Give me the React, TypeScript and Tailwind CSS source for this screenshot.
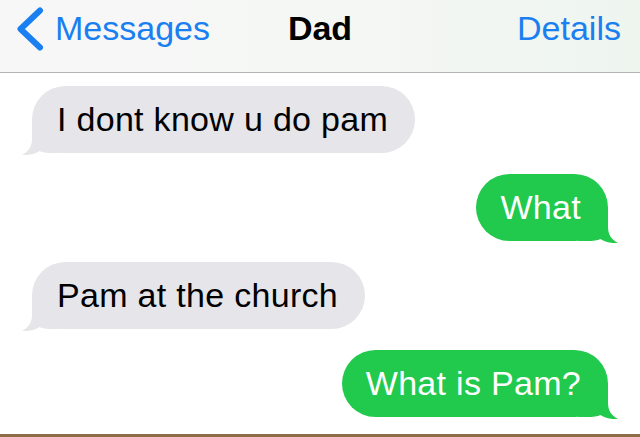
import type { ReactNode } from "react"

type Side = "in" | "out"

interface Message {
  id: number
  side: Side
  text: string
}

const messages: Message[] = [
  { id: 1, side: "in", text: "I dont know u do pam" },
  { id: 2, side: "out", text: "What" },
  { id: 3, side: "in", text: "Pam at the church" },
  { id: 4, side: "out", text: "What is Pam?" },
]

const font = { fontFamily: '"Liberation Sans", Helvetica, Arial, sans-serif' }

// little curled tail on the bottom corner of a bubble
function Tail({ side, color }: { side: Side; color: string }) {
  return (
    <svg
      width="40"
      height="36"
      viewBox="0 0 40 36"
      className={
        side === "in"
          ? "absolute -left-[10px] -bottom-[2px]"
          : "absolute -right-[10px] -bottom-[2px] -scale-x-100"
      }
    >
      <path
        d="M10 0 L10 20 C10 28 6 33 0 36 C7 36.5 13 35 17.5 32 C20.5 33.5 25 34 30 34 L40 34 L40 0 Z"
        fill={color}
      />
    </svg>
  )
}

function Bubble({ side, children }: { side: Side; children: ReactNode }) {
  const incoming = side === "in"
  return (
    <div className={incoming ? "flex justify-start" : "flex justify-end"}>
      <div
        className={
          incoming
            ? "relative rounded-full bg-[#e5e5ea] py-4 pl-[25px] pr-[27px] text-[34px] leading-[35px] tracking-[0.3px] text-black"
            : "relative rounded-full bg-[#21c94d] py-4 pl-[24px] pr-[27px] text-[34px] leading-[35px] tracking-[0.3px] text-white"
        }
      >
        <Tail side={side} color={incoming ? "#e5e5ea" : "#21c94d"} />
        <span className="relative whitespace-nowrap">{children}</span>
      </div>
    </div>
  )
}

function NavBar() {
  return (
    <header className="grid h-[73px] grid-cols-3 items-start border-b border-[#b4b4b4] bg-gradient-to-r from-[#f7f7f7] via-[#f5f7f5] to-[#eef5ef] pt-[11px] text-[34px] leading-[34px]">
      <div className="flex items-start pl-[16px] text-[#1a7ff0]">
        <svg width="28" height="44" viewBox="0 0 28 44" className="-mt-[4px]">
          <polyline
            points="24,3.5 4.5,22 24,40.5"
            fill="none"
            stroke="currentColor"
            strokeWidth="6"
            strokeLinecap="round"
            strokeLinejoin="round"
          />
        </svg>
        <span className="ml-[11px]">Messages</span>
      </div>
      <div className="text-center font-bold text-black">Dad</div>
      <div className="pr-[19px] text-right text-[#1a7ff0]">Details</div>
    </header>
  )
}

export default function App() {
  return (
    <div className="flex h-[437px] w-[640px] flex-col overflow-hidden bg-white" style={font}>
      <NavBar />
      <main className="flex flex-col gap-[21px] px-8 pt-[13px]">
        {messages.map((m) => (
          <Bubble key={m.id} side={m.side}>
            {m.text}
          </Bubble>
        ))}
      </main>
      <div className="flex-1" />
      <div className="h-[3px] bg-[#8d6e47]" />
    </div>
  )
}
